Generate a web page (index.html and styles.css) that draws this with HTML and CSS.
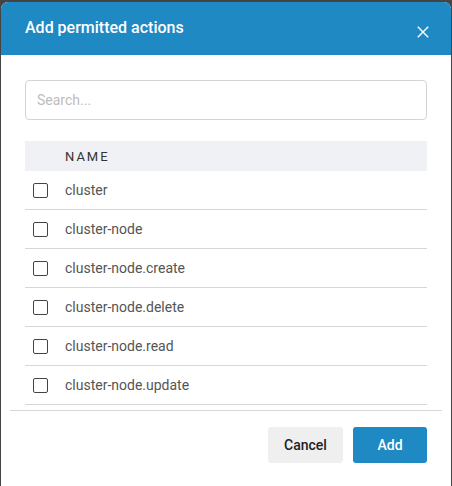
FILE: index.html
```html
<!DOCTYPE html>
<html>
<head>
<meta charset="utf-8">
<link rel="stylesheet" href="styles.css">
</head>
<body>
<div class="modal">
  <div class="modal-header">
    <span class="title">Add permitted actions</span>
    <svg class="close" width="12" height="12" viewBox="0 0 12 12"><path d="M0.8 0.8 L11.2 11.2 M11.2 0.8 L0.8 11.2" stroke="#fff" stroke-width="1.4" fill="none"/></svg>
  </div>
  <div class="modal-body">
    <div class="search">Search...</div>
    <div class="table">
      <div class="thead"><span class="col-name">NAME</span></div>
      <div class="row"><span class="cb"></span><span class="name">cluster</span></div>
      <div class="row"><span class="cb"></span><span class="name">cluster-node</span></div>
      <div class="row"><span class="cb"></span><span class="name">cluster-node.create</span></div>
      <div class="row"><span class="cb"></span><span class="name">cluster-node.delete</span></div>
      <div class="row"><span class="cb"></span><span class="name">cluster-node.read</span></div>
      <div class="row"><span class="cb"></span><span class="name">cluster-node.update</span></div>
    </div>
  </div>
  <div class="modal-footer">
    <button class="btn btn-cancel">Cancel</button>
    <button class="btn btn-add">Add</button>
  </div>
</div>
</body>
</html>
```
FILE: styles.css
```css
html, body {
  margin: 0;
  padding: 0;
  background: #444;
  font-family: Roboto, "Liberation Sans", sans-serif;
}
.modal {
  margin: 2px 1px 0 1px;
  width: 450px;
  height: 484px;
  background: #fff;
  border-radius: 7px 7px 0 0;
  overflow: hidden;
  display: flex;
  flex-direction: column;
}
.modal-header {
  height: 53px;
  background: #1f89c4;
  display: flex;
  align-items: center;
  justify-content: space-between;
  padding: 0 22px 0 24px;
  flex-shrink: 0;
}
.title {
  color: #fff;
  font-size: 16px;
  font-weight: 500;
  margin-top: -2px;
}
.close {
  display: block;
  margin-top: 6px;
}
.modal-body {
  padding: 25px 24px 0 24px;
}
.search {
  height: 38px;
  border: 1px solid #d3d3d3;
  border-radius: 4px;
  display: flex;
  align-items: center;
  padding-left: 11px;
  color: #bdbdbd;
  font-size: 14px;
}
.table {
  margin-top: 21px;
}
.thead {
  height: 30px;
  background: #f0f1f5;
  display: flex;
  align-items: center;
  padding-left: 40px;
}
.col-name {
  font-size: 13px;
  letter-spacing: 2px;
  color: #333;
  font-weight: 400;
}
.row {
  height: 38px;
  border-bottom: 1px solid #d6d6d6;
  display: flex;
  align-items: center;
  padding-left: 8px;
}
.cb {
  width: 13px;
  height: 13px;
  border: 1.5px solid #444;
  border-radius: 2px;
  margin-right: 17px;
  box-sizing: content-box;
}
.name {
  font-size: 14px;
  color: #555;
}
.modal-footer {
  margin: 5px 9px 0 9px;
  border-top: 1px solid #d6d6d6;
  display: flex;
  justify-content: flex-end;
  gap: 10px;
  padding: 16px 15px 0 0;
}
.btn {
  height: 36px;
  border: none;
  border-radius: 3px;
  font-family: Roboto, "Liberation Sans", sans-serif;
  font-size: 14px;
  font-weight: 500;
  cursor: pointer;
}
.btn-cancel {
  width: 75px;
  background: #efefef;
  color: #222;
}
.btn-add {
  width: 74px;
  background: #1f89c4;
  color: #fff;
}
```
